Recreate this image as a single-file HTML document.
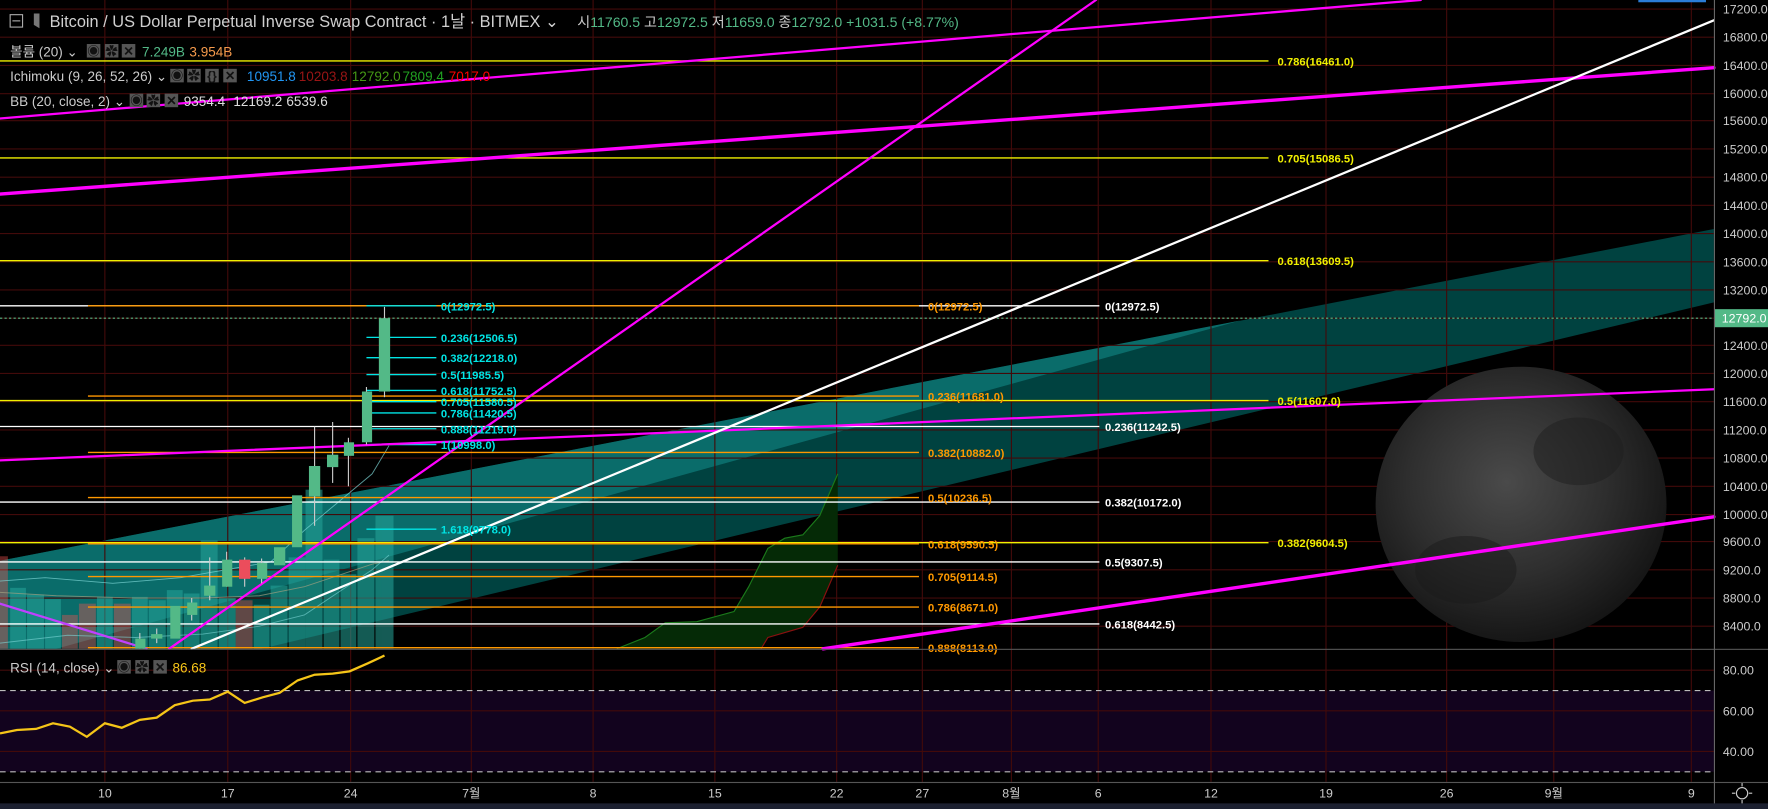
<!DOCTYPE html>
<html><head><meta charset="utf-8"><style>
html,body{margin:0;padding:0;background:#000;overflow:hidden}
svg{display:block}
text{font-family:"Liberation Sans","Noto Sans CJK KR",sans-serif}
</style></head><body>
<svg width="1768" height="809" viewBox="0 0 1568 717" preserveAspectRatio="none" xmlns="http://www.w3.org/2000/svg">
<rect width="1568" height="717" fill="#000"/>
<polygon points="0,497 1520,203 1520,268 232,575 0,575" fill="#004240"/>
<polygon points="0,497 1100,284 50,575 0,575" fill="#0a6c6a"/>
<rect x="0" y="612" width="1520" height="72" fill="#12031e"/>
<g stroke="#420a0a" stroke-width="1">
<line x1="0" y1="8" x2="1520" y2="8"/><line x1="0" y1="33" x2="1520" y2="33"/><line x1="0" y1="58" x2="1520" y2="58"/><line x1="0" y1="83" x2="1520" y2="83"/><line x1="0" y1="107" x2="1520" y2="107"/><line x1="0" y1="132" x2="1520" y2="132"/><line x1="0" y1="157" x2="1520" y2="157"/><line x1="0" y1="182" x2="1520" y2="182"/><line x1="0" y1="207" x2="1520" y2="207"/><line x1="0" y1="232" x2="1520" y2="232"/><line x1="0" y1="257" x2="1520" y2="257"/><line x1="0" y1="282" x2="1520" y2="282"/><line x1="0" y1="306" x2="1520" y2="306"/><line x1="0" y1="331" x2="1520" y2="331"/><line x1="0" y1="356" x2="1520" y2="356"/><line x1="0" y1="381" x2="1520" y2="381"/><line x1="0" y1="406" x2="1520" y2="406"/><line x1="0" y1="431" x2="1520" y2="431"/><line x1="0" y1="456" x2="1520" y2="456"/><line x1="0" y1="480" x2="1520" y2="480"/><line x1="0" y1="505" x2="1520" y2="505"/><line x1="0" y1="530" x2="1520" y2="530"/><line x1="0" y1="555" x2="1520" y2="555"/>
<line x1="0" y1="594" x2="1520" y2="594"/><line x1="0" y1="630" x2="1520" y2="630"/><line x1="0" y1="666" x2="1520" y2="666"/>
<line x1="93" y1="0" x2="93" y2="693"/><line x1="202" y1="0" x2="202" y2="693"/><line x1="311" y1="0" x2="311" y2="693"/><line x1="418" y1="0" x2="418" y2="693"/><line x1="526" y1="0" x2="526" y2="693"/><line x1="634" y1="0" x2="634" y2="693"/><line x1="742" y1="0" x2="742" y2="693"/><line x1="818" y1="0" x2="818" y2="693"/><line x1="897" y1="0" x2="897" y2="693"/><line x1="974" y1="0" x2="974" y2="693"/><line x1="1074" y1="0" x2="1074" y2="693"/><line x1="1176" y1="0" x2="1176" y2="693"/><line x1="1283" y1="0" x2="1283" y2="693"/><line x1="1378" y1="0" x2="1378" y2="693"/><line x1="1500" y1="0" x2="1500" y2="693"/>
</g>
<polygon points="547,575 572,565 590,552 618,551 651,542 664,520 681,486 696,477 712,474 727,457 743,420 743,501 727,538 712,556 681,565 675,575" fill="#052a06"/>
<polyline points="547,575 572,565 590,552 618,551 651,542 664,520 681,486 696,477 712,474 727,457 743,420" fill="none" stroke="#1b7a1b" stroke-width="1"/>
<polyline points="743,501 727,538 712,556 681,565 675,575" fill="none" stroke="#8a1010" stroke-width="1"/>
<defs><radialGradient id="fg" cx="0.45" cy="0.42" r="0.62"><stop offset="0" stop-color="#4a4a4a"/><stop offset="0.55" stop-color="#2e2e2e"/><stop offset="1" stop-color="#121212"/></radialGradient></defs>
<ellipse cx="1349" cy="447" rx="129" ry="122" fill="url(#fg)"/>
<ellipse cx="1300" cy="505" rx="45" ry="30" fill="#1a1a1a" opacity="0.5"/>
<ellipse cx="1400" cy="400" rx="40" ry="30" fill="#1e1e1e" opacity="0.5"/>
<g fill="#26a69a" opacity="0.55">
<rect x="9" y="521" width="14" height="54"/><rect x="24" y="527" width="15" height="48"/><rect x="40" y="531" width="14" height="44"/><rect x="86" y="529" width="14" height="46"/><rect x="117" y="529" width="14" height="46"/><rect x="132" y="532" width="15" height="43"/><rect x="148" y="523" width="14" height="52"/><rect x="163" y="526" width="14" height="49"/><rect x="178" y="479" width="15" height="96"/><rect x="194" y="530" width="15" height="45"/><rect x="225" y="536" width="14" height="39"/><rect x="240" y="519" width="15" height="56"/><rect x="256" y="494" width="15" height="81"/><rect x="271" y="434" width="15" height="141"/><rect x="287" y="496" width="14" height="79"/><rect x="302" y="509" width="14" height="66"/><rect x="317" y="477" width="15" height="98"/><rect x="333" y="457" width="16" height="118"/>
</g>
<g fill="#ef5350" opacity="0.4"><rect x="0" y="493" width="7" height="82"/><rect x="55" y="545" width="14" height="30"/><rect x="70" y="535" width="15" height="40"/><rect x="101" y="535" width="15" height="40"/><rect x="209" y="532" width="15" height="43"/></g>
<polyline points="0,515 40,512 100,517 160,512 200,505 240,498 270,470 300,445 330,420 345,395" fill="none" stroke="#7fd8d8" stroke-width="0.8" opacity="0.7"/>
<polyline points="0,525 50,528 120,530 180,530 230,528 270,520 300,510 330,500 345,497" fill="none" stroke="#a0a080" stroke-width="0.8" opacity="0.7"/>
<polyline points="0,570 60,563 120,565 180,562 230,555 270,545 300,525 330,505 345,492" fill="none" stroke="#7fd8d8" stroke-width="0.8" opacity="0.6"/>
<g stroke-width="1.2">
<line x1="0" y1="54" x2="1125" y2="54" stroke="#f0f000"/>
<line x1="0" y1="140" x2="1125" y2="140" stroke="#f0f000"/>
<line x1="0" y1="231" x2="1125" y2="231" stroke="#f0f000"/>
<line x1="0" y1="271" x2="975" y2="271" stroke="#fff"/>
<line x1="78" y1="271" x2="815" y2="271" stroke="#ff9800"/>
<line x1="78" y1="351" x2="815" y2="351" stroke="#ff9800"/>
<line x1="0" y1="355" x2="1125" y2="355" stroke="#f0f000"/>
<line x1="0" y1="378" x2="975" y2="378" stroke="#fff"/>
<line x1="78" y1="401" x2="815" y2="401" stroke="#ff9800"/>
<line x1="78" y1="441" x2="815" y2="441" stroke="#ff9800"/>
<line x1="0" y1="445" x2="975" y2="445" stroke="#fff"/>
<line x1="0" y1="481" x2="1125" y2="481" stroke="#f0f000"/>
<line x1="78" y1="482" x2="815" y2="482" stroke="#ff9800"/>
<line x1="0" y1="498" x2="975" y2="498" stroke="#fff"/>
<line x1="78" y1="511" x2="815" y2="511" stroke="#ff9800"/>
<line x1="78" y1="538" x2="815" y2="538" stroke="#ff9800"/>
<line x1="0" y1="553" x2="975" y2="553" stroke="#fff"/>
<line x1="78" y1="574" x2="815" y2="574" stroke="#ff9800"/>
</g>
<line x1="0" y1="282" x2="1520" y2="282" stroke="#53b987" stroke-dasharray="2,2"/>
<g stroke="#00e5e5" stroke-width="1.2">
<line x1="325" y1="271" x2="387" y2="271"/><line x1="325" y1="299" x2="387" y2="299"/><line x1="325" y1="317" x2="387" y2="317"/><line x1="325" y1="332" x2="387" y2="332"/><line x1="325" y1="346" x2="387" y2="346"/><line x1="325" y1="356" x2="387" y2="356"/><line x1="325" y1="366" x2="387" y2="366"/><line x1="325" y1="380" x2="387" y2="380"/><line x1="325" y1="394" x2="387" y2="394"/><line x1="325" y1="469" x2="387" y2="469"/>
</g>
<g fill="none" stroke-linecap="round">
<line x1="0" y1="105" x2="1260" y2="0" stroke="#ff00ff" stroke-width="2"/>
<line x1="0" y1="172" x2="1520" y2="60" stroke="#ff00ff" stroke-width="3"/>
<line x1="150" y1="575" x2="972" y2="0" stroke="#ff00ff" stroke-width="2"/>
<line x1="0" y1="408" x2="1520" y2="345" stroke="#ff00ff" stroke-width="2"/>
<line x1="730" y1="575" x2="1520" y2="458" stroke="#ff00ff" stroke-width="3"/>
<line x1="0" y1="535" x2="130" y2="575" stroke="#c040ff" stroke-width="2"/>
<line x1="170" y1="575" x2="1520" y2="18" stroke="#fff" stroke-width="2"/>
</g>
<g stroke="#ccc" stroke-width="1">
<line x1="341" y1="272" x2="341" y2="352"/><line x1="325" y1="343" x2="325" y2="394"/><line x1="309" y1="388" x2="309" y2="431"/><line x1="295" y1="374" x2="295" y2="428"/><line x1="279" y1="378" x2="279" y2="466"/><line x1="232" y1="495" x2="232" y2="517"/><line x1="217" y1="494" x2="217" y2="520"/><line x1="201" y1="489" x2="201" y2="520"/><line x1="186" y1="494" x2="186" y2="532"/><line x1="170" y1="530" x2="170" y2="550"/><line x1="139" y1="557" x2="139" y2="570"/><line x1="124" y1="561" x2="124" y2="575"/>
</g>
<g fill="#53b987">
<rect x="336" y="282" width="10" height="65"/><rect x="321" y="347" width="9" height="45"/><rect x="305" y="392" width="9" height="12"/><rect x="290" y="403" width="10" height="11"/><rect x="274" y="413" width="10" height="27"/><rect x="259" y="439" width="9" height="46"/><rect x="243" y="485" width="10" height="16"/><rect x="228" y="499" width="9" height="14"/><rect x="197" y="496" width="9" height="24"/><rect x="181" y="519" width="10" height="9"/><rect x="166" y="534" width="9" height="11"/><rect x="151" y="537" width="9" height="29"/><rect x="134" y="562" width="10" height="4"/><rect x="120" y="566" width="9" height="9"/>
</g>
<rect x="212" y="496" width="10" height="17" fill="#eb4d5c"/>
<g font-size="10" font-weight="bold">
<text x="1133" y="58" fill="#f0f000">0.786(16461.0)</text>
<text x="1133" y="144" fill="#f0f000">0.705(15086.5)</text>
<text x="1133" y="235" fill="#f0f000">0.618(13609.5)</text>
<text x="1133" y="359" fill="#f0f000">0.5(11607.0)</text>
<text x="1133" y="485" fill="#f0f000">0.382(9604.5)</text>
<text x="823" y="275" fill="#ff9800">0(12972.5)</text>
<text x="823" y="355" fill="#ff9800">0.236(11681.0)</text>
<text x="823" y="405" fill="#ff9800">0.382(10882.0)</text>
<text x="823" y="445" fill="#ff9800">0.5(10236.5)</text>
<text x="823" y="486" fill="#ff9800">0.618(9590.5)</text>
<text x="823" y="515" fill="#ff9800">0.705(9114.5)</text>
<text x="823" y="542" fill="#ff9800">0.786(8671.0)</text>
<text x="823" y="578" fill="#ff9800">0.888(8113.0)</text>
<text x="980" y="275" fill="#fff">0(12972.5)</text>
<text x="980" y="382" fill="#fff">0.236(11242.5)</text>
<text x="980" y="449" fill="#fff">0.382(10172.0)</text>
<text x="980" y="502" fill="#fff">0.5(9307.5)</text>
<text x="980" y="557" fill="#fff">0.618(8442.5)</text>
<g fill="#00e5e5">
<text x="391" y="275">0(12972.5)</text><text x="391" y="303">0.236(12506.5)</text><text x="391" y="321">0.382(12218.0)</text><text x="391" y="336">0.5(11985.5)</text><text x="391" y="350">0.618(11752.5)</text><text x="391" y="360">0.705(11580.5)</text><text x="391" y="370">0.786(11420.5)</text><text x="391" y="384">0.888(11219.0)</text><text x="391" y="398">1(10998.0)</text><text x="391" y="473">1.618(9778.0)</text>
</g>
</g>
<rect x="0" y="575" width="1568" height="1" fill="#555"/>
<line x1="0" y1="612" x2="1520" y2="612" stroke="#bbb" stroke-dasharray="5,4"/>
<line x1="0" y1="684" x2="1520" y2="684" stroke="#bbb" stroke-dasharray="5,4"/>
<polyline points="0,650 15,647 32,646 47,641 62,644 77,653 93,641 108,645 124,638 139,636 155,625 171,621 186,620 202,613 217,623 233,618 248,614 264,603 279,598 295,597 310,595 326,588 341,581" fill="none" stroke="#f5c518" stroke-width="2"/>
<rect x="0" y="693" width="1568" height="1" fill="#555"/>
<rect x="1520" y="0" width="1" height="713" fill="#666"/>
<rect x="0" y="712" width="1568" height="5" fill="#1c2030"/>
<rect x="1453" y="0" width="60" height="2" fill="#2a7dd8"/>
<g font-size="11" fill="#ccc">
<text x="1528" y="12">17200.0</text><text x="1528" y="37">16800.0</text><text x="1528" y="62">16400.0</text><text x="1528" y="87">16000.0</text><text x="1528" y="111">15600.0</text><text x="1528" y="136">15200.0</text><text x="1528" y="161">14800.0</text><text x="1528" y="186">14400.0</text><text x="1528" y="211">14000.0</text><text x="1528" y="236">13600.0</text><text x="1528" y="261">13200.0</text><text x="1528" y="310">12400.0</text><text x="1528" y="335">12000.0</text><text x="1528" y="360">11600.0</text><text x="1528" y="385">11200.0</text><text x="1528" y="410">10800.0</text><text x="1528" y="435">10400.0</text><text x="1528" y="460">10000.0</text><text x="1528" y="484">9600.0</text><text x="1528" y="509">9200.0</text><text x="1528" y="534">8800.0</text><text x="1528" y="559">8400.0</text>
<text x="1528" y="598">80.00</text><text x="1528" y="634">60.00</text><text x="1528" y="670">40.00</text>
</g>
<rect x="1521" y="274" width="47" height="16" fill="#53b987"/>
<text x="1527" y="286" font-size="11" fill="#fff">12792.0</text>
<g font-size="11" fill="#ccc" text-anchor="middle">
<text x="93" y="707">10</text><text x="202" y="707">17</text><text x="311" y="707">24</text><text x="418" y="707">7월</text><text x="526" y="707">8</text><text x="634" y="707">15</text><text x="742" y="707">22</text><text x="818" y="707">27</text><text x="897" y="707">8월</text><text x="974" y="707">6</text><text x="1074" y="707">12</text><text x="1176" y="707">19</text><text x="1283" y="707">26</text><text x="1378" y="707">9월</text><text x="1500" y="707">9</text>
</g>
<g stroke="#ccc" fill="none" stroke-width="1"><circle cx="1545" cy="703" r="5"/><line x1="1545" y1="694" x2="1545" y2="697"/><line x1="1545" y1="709" x2="1545" y2="712"/><line x1="1536" y1="703" x2="1539" y2="703"/><line x1="1551" y1="703" x2="1554" y2="703"/></g>
<rect x="9" y="13" width="11" height="11" fill="none" stroke="#aaa"/><line x1="11" y1="18.5" x2="18" y2="18.5" stroke="#aaa"/>
<path d="M30 12h5v13l-5-3z" fill="#777"/>
<text x="44" y="24" font-size="14.5" fill="#d0d0d0">Bitcoin / US Dollar Perpetual Inverse Swap Contract · 1날 · BITMEX ⌄</text>
<text x="512" y="24" font-size="12.5" fill="#ccc">시<tspan fill="#53b987">11760.5</tspan>  고<tspan fill="#53b987">12972.5</tspan>  저<tspan fill="#53b987">11659.0</tspan>  종<tspan fill="#53b987">12792.0</tspan>  <tspan fill="#53b987">+1031.5 (+8.77%)</tspan></text>
<g font-size="12" fill="#ccc">
<text x="9" y="50">볼륨 (20) ⌄</text>
<text x="9" y="72">Ichimoku (9, 26, 52, 26) ⌄</text>
<text x="9" y="94">BB (20, close, 2) ⌄</text>
<text x="9" y="596">RSI (14, close) ⌄</text>
</g>
<g fill="#555">
<rect x="77" y="39" width="12" height="12"/><rect x="93" y="39" width="12" height="12"/><rect x="108" y="39" width="12" height="12"/>
<rect x="151" y="61" width="12" height="12"/><rect x="166" y="61" width="12" height="12"/><rect x="182" y="61" width="12" height="12"/><rect x="198" y="61" width="12" height="12"/>
<rect x="115" y="83" width="12" height="12"/><rect x="130" y="83" width="12" height="12"/><rect x="146" y="83" width="12" height="12"/>
<rect x="104" y="585" width="12" height="12"/><rect x="120" y="585" width="12" height="12"/><rect x="136" y="585" width="12" height="12"/>
</g>
<g font-size="11" fill="#111" text-anchor="middle" font-weight="bold">
<text x="83" y="49">◉</text><text x="99" y="49">✿</text><text x="114" y="49">✕</text>
<text x="157" y="71">◉</text><text x="172" y="71">✿</text><text x="188" y="71">{}</text><text x="204" y="71">✕</text>
<text x="121" y="93">◉</text><text x="136" y="93">✿</text><text x="152" y="93">✕</text>
<text x="110" y="595">◉</text><text x="126" y="595">✿</text><text x="142" y="595">✕</text>
</g>
<g font-size="12">
<text x="126" y="50" fill="#53b987">7.249B</text><text x="168" y="50" fill="#f59a4c">3.954B</text>
<text x="219" y="72" fill="#2196f3">10951.8</text><text x="265" y="72" fill="#991515">10203.8</text><text x="312" y="72" fill="#459915">12792.0</text><text x="357" y="72" fill="#21a121">7809.4</text><text x="398" y="72" fill="#ff0000">7017.0</text>
<text x="163" y="94" fill="#ddd">9354.4</text><text x="207" y="94" fill="#ddd">12169.2</text><text x="254" y="94" fill="#ddd">6539.6</text>
<text x="153" y="596" fill="#f5c518">86.68</text>
</g>
</svg>
</body></html>
